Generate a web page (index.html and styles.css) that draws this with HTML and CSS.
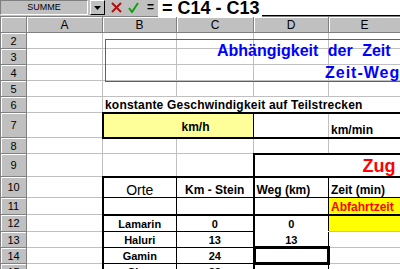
FILE: index.html
```
<!DOCTYPE html>
<html>
<head>
    <title>Zeit-Weg</title>
    <meta charset="utf-8">
    <link rel="stylesheet" href="styles.css">
</head>
<body>
    <div class="toolbar">
        <div class="namebox">SUMME</div>
        <div class="dropbtn">
            <svg width="7" height="4" viewBox="0 0 7 4"><path d="M0 0h7L3.5 4z" fill="#000"/></svg>
        </div>
        <svg class="tool-x" width="11" height="11" viewBox="0 0 11 11"><path d="M1 1L10 10M10 1L1 10" stroke="#b01010" stroke-width="2"/></svg>
        <svg class="tool-ok" width="11" height="11" viewBox="0 0 11 11"><path d="M1 6L4 10L10 1" stroke="#10a010" stroke-width="2" fill="none"/></svg>
        <span class="eq">=</span>
        <div class="formula"><span class="ftext">= C14 - C13</span></div>
    </div>

    <table class="grid">
        <colgroup>
            <col class="c-rh"><col class="c-a"><col class="c-b"><col class="c-c"><col class="c-d"><col class="c-e">
        </colgroup>
        <tr class="h16">
            <th class="corner"></th><th class="ch">A</th><th class="ch">B</th><th class="ch">C</th><th class="ch">D</th><th class="ch">E</th>
        </tr>
        <tr class="h16"><th class="rh">2</th><td></td><td></td><td></td><td></td><td></td></tr>
        <tr class="h16"><th class="rh">3</th><td></td><td></td><td></td><td></td><td></td></tr>
        <tr class="h16"><th class="rh">4</th><td></td><td></td><td></td><td></td><td></td></tr>
        <tr class="h16"><th class="rh">5</th><td></td><td></td><td></td><td></td><td></td></tr>
        <tr class="h16">
            <th class="rh">6</th><td></td>
            <td class="big wide nosep">konstante Geschwindigkeit auf Teilstrecken</td>
            <td class="nosep"></td><td class="nosep"></td><td></td>
        </tr>
        <tr class="h25">
            <th class="rh">7</th><td></td>
            <td class="big pale bt2 bb2 bl2 br1 kmh" colspan="2">km/h</td>
            <td class="bt2 bb2"></td>
            <td class="big bt2 bb2">km/min</td>
        </tr>
        <tr class="h16"><th class="rh">8</th><td></td><td></td><td></td><td></td><td></td></tr>
        <tr class="h23">
            <th class="rh">9</th><td></td><td></td><td></td>
            <td class="bt2 bl2 nosep"></td>
            <td class="bt2 zug">Zug</td>
        </tr>
        <tr class="h21">
            <th class="rh">10</th><td></td>
            <td class="orte center bt2 bl2 br1 bb1">Orte</td>
            <td class="big center bt2 br2 bb1">Km - Stein</td>
            <td class="big bt2 br1 bb1">Weg (km)</td>
            <td class="big bt2 bb1">Zeit (min)</td>
        </tr>
        <tr class="h17">
            <th class="rh">11</th><td></td>
            <td class="bl2 br1 bb2"></td>
            <td class="br2 bb2"></td>
            <td class="br1 bb2"></td>
            <td class="big yellow red bb2">Abfahrtzeit</td>
        </tr>
        <tr class="h17">
            <th class="rh">12</th><td></td>
            <td class="center bl2 br1 bb1">Lamarin</td>
            <td class="center br2 bb1">0</td>
            <td class="center br1 bbw">0</td>
            <td class="yellow"></td>
        </tr>
        <tr class="h16">
            <th class="rh">13</th><td></td>
            <td class="center bl2 br1 bb1">Haluri</td>
            <td class="center br2 bb1 copy">13</td>
            <td class="center br1 bbw">13</td>
            <td></td>
        </tr>
        <tr class="h16">
            <th class="rh">14</th><td></td>
            <td class="center bl2 br1 bb1">Gamin</td>
            <td class="center br2 bb1">24</td>
            <td class="center br1 bbw active"></td>
            <td></td>
        </tr>
        <tr class="h16">
            <th class="rh">15</th><td></td>
            <td class="center bl2 br1 bb1">Sion</td>
            <td class="center br2 bb1">33</td>
            <td class="br1 bbw"></td>
            <td></td>
        </tr>
    </table>

    <div class="titlebox">
        <div class="title-1">Abhängigkeit der Zeit vom Weg</div>
        <div class="title-2">Zeit-Weg-Diagramm</div>
    </div>
</body>
</html>
```

FILE: styles.css
```
* {
    box-sizing: border-box;
}
body {
    margin: 0;
    width: 400px;
    height: 269px;
    overflow: hidden;
    position: relative;
    background-color: #fff;
    font-family: "Liberation Sans", Arial, sans-serif;
    color: #000;
}

/* formula bar */
.toolbar {
    display: flex;
    align-items: flex-start;
    height: 16px;
    background-color: #c0c0c0;
}
.namebox {
    width: 88px;
    height: 15px;
    border: 1px solid;
    border-color: #808080 #fff #fff #808080;
    font-size: 9px;
    line-height: 13px;
    text-align: center;
}
.dropbtn {
    width: 15px;
    height: 15px;
    margin-left: 2px;
    border: 1px solid;
    border-color: #fff #000 #000 #fff;
    display: flex;
    align-items: center;
    justify-content: center;
}
.tool-x {
    margin: 2px 0 0 6px;
}
.tool-ok {
    margin: 2px 0 0 6px;
}
.eq {
    font-size: 12px;
    font-weight: bold;
    line-height: 14px;
    margin-left: 8px;
}
.formula {
    flex: 1;
    height: 16px;
    margin-left: 4px;
    background-color: #fff;
    border-bottom: 1px solid #000;
}
.ftext {
    display: inline-block;
    height: 16px;
    padding: 0 2px 0 4px;
    background-color: #fff;
    font-size: 18px;
    font-weight: bold;
    line-height: 14px;
}

/* sheet */
.grid {
    border-collapse: collapse;
    table-layout: fixed;
    width: 400px;
}
.c-rh { width: 26px; }
.c-a { width: 76px; }
.c-b { width: 74px; }
.c-c { width: 77px; }
.c-d { width: 75px; }
.c-e { width: 72px; }
.h16 { height: 16px; }
.h17 { height: 17px; }
.h21 { height: 21px; }
.h23 { height: 23px; }
.h25 { height: 25px; }

.corner, .ch, .rh {
    background-color: #c0c0c0;
    border: 1px solid #808080;
    box-shadow: inset 1px 1px #fff;
    font-weight: normal;
    padding: 0;
    text-align: center;
}
.ch {
    font-size: 12px;
    line-height: 14px;
}
.rh {
    font-size: 11px;
    line-height: 12px;
}
td {
    border: 1px solid #c0c0c0;
    padding: 0 2px 1px;
    font-size: 11px;
    font-weight: bold;
    line-height: 12px;
    white-space: nowrap;
    overflow: visible;
    vertical-align: bottom;
}
.big { font-size: 12px; }
.wide { letter-spacing: 0.2px; }
.center { text-align: center; }
.nosep { border-right-style: hidden; }
.pale { background-color: #ffff99; }
.yellow { background-color: #ffff00; }
.red { color: #ff0000; }
.kmh {
    padding-left: 78px;
    padding-bottom: 4px;
}
.zug {
    color: #ff0000;
    font-size: 18px;
    line-height: 18px;
    padding-left: 34px;
}
.orte {
    font-size: 14px;
    font-weight: normal;
}

.bt2 { border-top: 2px solid #000; }
.bb2 { border-bottom: 2px solid #000; }
.bl2 { border-left: 2px solid #000; }
.br2 { border-right: 2px solid #000; }
.br1 { border-right: 1px solid #000; }
.bb1 { border-bottom: 1px solid #000; }
.bbw { border-bottom: 1px solid #fff; }

/* copy marquee and active cell */
.copy, .active {
    position: relative;
}
.copy::after {
    content: "";
    position: absolute;
    left: -1px;
    top: -1px;
    right: -1px;
    bottom: -1px;
    border: 1px dashed #000;
}
.active::after {
    content: "";
    position: absolute;
    left: -2px;
    top: -2px;
    right: -2px;
    bottom: -2px;
    border: 3px solid #000;
}

/* drawn text box over the sheet */
.titlebox {
    position: absolute;
    left: 105px;
    top: 39px;
    width: 330px;
    height: 43px;
    border: 1px solid #3060e0;
    color: #0000ff;
    font-size: 16px;
    font-weight: bold;
    line-height: 22px;
    white-space: nowrap;
}
.title-1 {
    padding-left: 111px;
    word-spacing: 5px;
}
.title-2 {
    padding-left: 219px;
    letter-spacing: 1px;
}
```
